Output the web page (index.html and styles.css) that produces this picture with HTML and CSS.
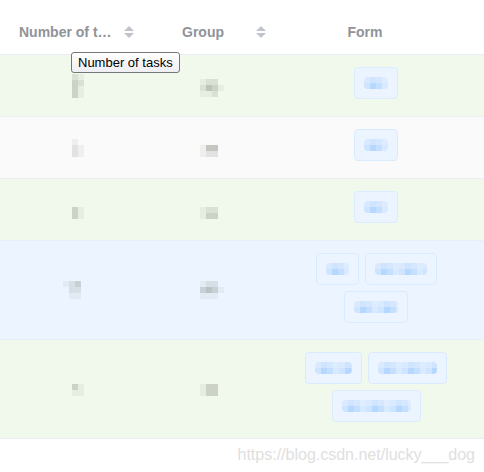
FILE: index.html
```html
<!DOCTYPE html>
<html>
<head>
<meta charset="utf-8">
<link rel="stylesheet" href="styles.css">
</head>
<body>
<div class="page">
  <table class="tbl">
    <colgroup><col class="c1"><col class="c2"><col class="c3"></colgroup>
    <thead>
      <tr>
        <th class="h1"><span class="htext">Number of t…</span><span class="caret"><i class="up"></i><i class="down"></i></span></th>
        <th class="h2"><span class="htext">Group</span><span class="caret"><i class="up"></i><i class="down"></i></span></th>
        <th class="h3"><span class="htext">Form</span></th>
      </tr>
    </thead>
    <tbody>
      <tr class="success short">
        <td><div class="pix w2"><b class="b"></b><b class="a"></b><b class="c"></b><b class="b"></b><b class="c"></b><b class="a"></b><b class="c"></b><b class="a"></b></div></td>
        <td><div class="pix w4 sh"><b class="a"></b><b class="b"></b><b class="b"></b><b></b><b class="b"></b><b class="d"></b><b class="c"></b><b class="a"></b><b class="a"></b><b class="a"></b><b class="b"></b><b></b></div></td>
        <td><div class="tags"><span class="tag"><span class="blur x24"></span></span></div></td>
      </tr>
      <tr class="plain short">
        <td><div class="pix w2"><b class="a"></b><b></b><b class="b"></b><b class="a"></b><b class="b"></b><b class="a"></b></div></td>
        <td><div class="pix w4 sh2"><b class="a"></b><b class="d"></b><b class="d"></b><b></b><b class="a"></b><b class="b"></b><b class="b"></b><b></b></div></td>
        <td><div class="tags"><span class="tag"><span class="blur x24"></span></span></div></td>
      </tr>
      <tr class="success short">
        <td><div class="pix w2 sh2"><b class="c"></b><b class="a"></b><b class="c"></b><b class="a"></b></div></td>
        <td><div class="pix w4 sh2"><b class="a"></b><b class="b"></b><b class="b"></b><b></b><b class="a"></b><b class="c"></b><b class="c"></b><b></b></div></td>
        <td><div class="tags"><span class="tag"><span class="blur x24"></span></span></div></td>
      </tr>
      <tr class="info tall">
        <td><div class="pix w3 left"><b class="a"></b><b class="b"></b><b class="c"></b><b></b><b class="b"></b><b class="b"></b><b></b><b class="a"></b><b class="a"></b></div></td>
        <td><div class="pix w4"><b class="a"></b><b class="b"></b><b class="b"></b><b></b><b class="c"></b><b class="d"></b><b class="c"></b><b class="a"></b><b class="a"></b><b class="a"></b><b class="a"></b><b></b></div></td>
        <td><div class="tags"><span class="tag"><span class="blur x23"></span></span><span class="tag"><span class="blur x52"></span></span><span class="tag"><span class="blur x44"></span></span></div></td>
      </tr>
      <tr class="success tall">
        <td><div class="pix w2"><b class="c"></b><b class="a"></b><b class="a"></b><b class="a"></b></div></td>
        <td><div class="pix w4"><b class="a"></b><b class="c"></b><b class="c"></b><b></b><b class="a"></b><b class="c"></b><b class="c"></b><b></b></div></td>
        <td><div class="tags"><span class="tag"><span class="blur x37"></span></span><span class="tag"><span class="blur x59"></span></span><span class="tag"><span class="blur x69"></span></span></div></td>
      </tr>
    </tbody>
  </table>
  <div class="watermark">https://blog.csdn.net/lucky___dog</div>
  <div class="tooltip">Number of tasks</div>
</div>
</body>
</html>
```
FILE: styles.css
```css
html, body {
  margin: 0;
  padding: 0;
  background: #ffffff;
}
.page {
  position: relative;
  width: 484px;
  height: 472px;
  font-family: "Liberation Sans", Arial, sans-serif;
}
.tbl {
  width: 484px;
  table-layout: fixed;
  border-collapse: collapse;
  border-spacing: 0;
}
.c1 { width: 155px; }
.c2 { width: 113px; }
.c3 { width: 216px; }
th {
  padding: 8px 0 0 0;
  height: 46px;
  border-bottom: 1px solid #ebeef5;
  color: #909399;
  font-size: 14px;
  font-weight: bold;
  text-align: left;
  vertical-align: middle;
  white-space: nowrap;
}
th.h1 { padding-left: 19px; }
th.h2 { padding-left: 27px; }
th.h3 { text-align: center; padding-right: 22px; }
.htext { display: inline-block; vertical-align: middle; }
.caret {
  display: inline-flex;
  flex-direction: column;
  gap: 2px;
  vertical-align: middle;
  margin-left: 12px;
}
.h2 .caret { margin-left: 32px; }
.caret i {
  display: block;
  width: 0;
  height: 0;
  border-left: 5px solid transparent;
  border-right: 5px solid transparent;
}
.caret .up { border-bottom: 5px solid #c0c4cc; }
.caret .down { border-top: 5px solid #c0c4cc; }

td {
  padding: 0 14px;
  border-bottom: 1px solid #ebeef5;
  vertical-align: middle;
  text-align: center;
}
td:first-child, td:nth-child(2) { padding: 0; }
tr.short td { height: 61px; }
tr.tall td { height: 98px; }
tr.success td { background: #f0f9eb; }
tr.plain td { background: #fafafa; }
tr.info td { background: #ecf5ff; }

.pix {
  display: inline-grid;
  grid-auto-rows: 6px;
  vertical-align: middle;
}
.pix.sh { margin-top: 4px; }
.pix.sh2 { margin-top: 6px; }
.pix.left { margin-left: -12px; }
.w2 { grid-template-columns: repeat(2, 6px); }
.w3 { grid-template-columns: repeat(3, 6px); }
.w4 { grid-template-columns: repeat(4, 6px); }
.pix b { display: block; }
.pix .a { background: rgba(60, 60, 50, 0.06); }
.pix .b { background: rgba(60, 60, 50, 0.12); }
.pix .c { background: rgba(60, 60, 50, 0.2); }
.pix .d { background: rgba(60, 60, 50, 0.28); }

.tags {
  display: flex;
  flex-wrap: wrap;
  justify-content: center;
  gap: 6px;
  padding-bottom: 5px;
}
.tag {
  display: inline-flex;
  align-items: center;
  justify-content: center;
  box-sizing: border-box;
  height: 32px;
  padding: 0 9px;
  background: #ecf5ff;
  border: 1px solid #d9ecff;
  border-radius: 4px;
}
.blur {
  display: block;
  height: 12px;
  border-radius: 4px;
  background:
    linear-gradient(180deg, rgba(226, 238, 255, 0.55) 0 6px, rgba(226, 238, 255, 0) 6px),
    repeating-linear-gradient(90deg, #cfe4ff 0 6px, #b6d8ff 6px 12px, #c4dfff 12px 18px, #d8eaff 18px 24px);
}
.x23 { width: 23px; }
.x24 { width: 24px; }
.x37 { width: 37px; }
.x44 { width: 44px; }
.x52 { width: 52px; }
.x59 { width: 59px; }
.x69 { width: 69px; }

.watermark {
  text-align: right;
  padding-right: 9px;
  padding-top: 7px;
  font-size: 16px;
  color: #e0e0e0;
  font-family: "Liberation Sans", Arial, sans-serif;
}
.tooltip {
  position: absolute;
  left: 71px;
  top: 52px;
  width: 109px;
  height: 21px;
  box-sizing: border-box;
  border: 1px solid #767676;
  border-radius: 3px;
  background: linear-gradient(#ffffff, #eeeef4);
  color: #000000;
  font-size: 13px;
  line-height: 19px;
  padding-left: 6px;
  font-family: "Liberation Sans", Arial, sans-serif;
  white-space: nowrap;
}
```
